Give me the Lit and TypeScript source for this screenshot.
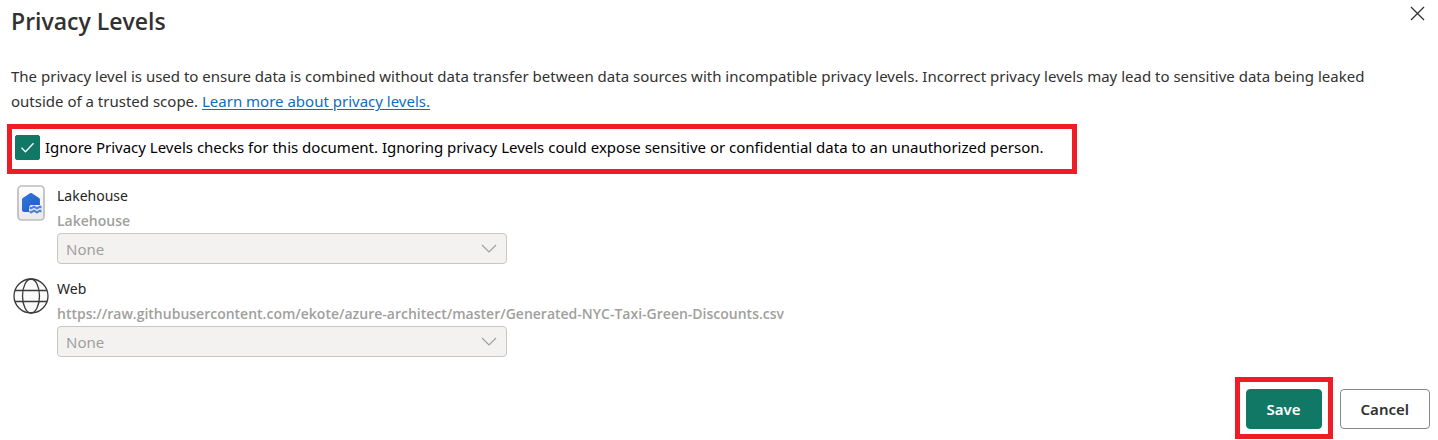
import { LitElement, html, css, svg } from "lit";
import { customElement, property, state } from "lit/decorators.js";

const lakehouseIcon = svg`
  <svg width="28" height="36" viewBox="0 0 28 36" aria-hidden="true">
    <defs>
      <linearGradient id="card" x1="0" y1="0" x2="0" y2="1">
        <stop offset="0" stop-color="#fdfdfd" />
        <stop offset="1" stop-color="#e9e9e9" />
      </linearGradient>
      <linearGradient id="house" x1="0" y1="0" x2="1" y2="1">
        <stop offset="0" stop-color="#2f78e0" />
        <stop offset="1" stop-color="#2459bd" />
      </linearGradient>
    </defs>
    <rect x="1" y="1" width="26" height="34" rx="3.5" fill="url(#card)" stroke="#bdbdbd" stroke-width="1.700" />
    <path d="M5 14.600c0-.6.3-1.100.8-1.500L13 8.200c.6-.4 1.300-.4 1.900 0l7.200 4.900c.5.4.8.9.8 1.500V20H14.500c-1.500 0-2.500 1-2.500 2.500V27H7c-1.100 0-2-.9-2-2z" fill="url(#house)" />
    <path d="M12.500 21.200q1.500 1.500 3 0t3 0 3 0 3 0v2.500q-1.500-1.500-3 0t-3 0-3 0-3 0zM12.500 25.200q1.500 1.500 3 0t3 0 3 0 3 0v2.500q-1.500-1.500-3 0t-3 0-3 0-3 0z" fill="#4a82dc" />
  </svg>`;

const webIcon = svg`
  <svg width="36" height="36" viewBox="0 0 36 36" aria-hidden="true">
    <g fill="none" stroke="#3b3a39" stroke-width="1.300">
      <circle cx="18" cy="18" r="17" fill="#fafafa" />
      <ellipse cx="18" cy="18" rx="8.500" ry="17" />
      <path d="M2 12.500h32M2 23.500h32" />
    </g>
  </svg>`;

@customElement("data-source-row")
export class DataSourceRow extends LitElement {
  @property() kind = "";
  @property() path = "";
  @property({ type: Boolean }) disabled = false;

  static styles = css`
    :host {
      display: flex;
      gap: 8px;
      color: #252423;
      font-size: 15px;
      line-height: 25px;
    }
    .icon {
      flex: none;
      display: flex;
      justify-content: center;
      align-items: flex-start;
      width: 36px;
      padding-top: 2px;
    }
    .body {
      flex: 1;
      min-width: 0;
    }
    .kind {
      font-size: 14px;
    }
    .path {
      display: block;
      color: #a19f9d;
      font-family: "Open Sans", sans-serif;
      font-size: 14px;
      font-weight: 600;
      overflow-wrap: anywhere;
    }
    .picker {
      display: grid;
      align-items: center;
      max-width: 450px;
    }
    .picker > * {
      grid-area: 1 / 1;
    }
    .level {
      appearance: none;
      box-sizing: border-box;
      width: 100%;
      height: 31px;
      margin: 0;
      padding: 2px 32px 0 8px;
      border: 1px solid #c8c6c4;
      border-radius: 4px;
      background: #f3f2f1;
      color: #a19f9d;
      font: inherit;
      opacity: 1;
    }
    .chevron {
      justify-self: end;
      margin-right: 10px;
      pointer-events: none;
    }
  `;

  render() {
    return html`
      <div class="icon">${this.kind === "Web" ? webIcon : lakehouseIcon}</div>
      <div class="body">
        <div class="kind">${this.kind}</div>
        <label class="path" for="level">${this.path}</label>
        <div class="picker">
          <select class="level" id="level" ?disabled=${this.disabled}>
            <option>None</option>
          </select>
          <svg class="chevron" width="16" height="9" viewBox="0 0 16 9" aria-hidden="true">
            <path d="M1 1l7 7 7-7" fill="none" stroke="#a19f9d" stroke-width="1.200" />
          </svg>
        </div>
      </div>
    `;
  }
}

@customElement("app-root")
export class AppRoot extends LitElement {
  @state() private ignoreLevels = true;

  private sources = [
    { kind: "Lakehouse", path: "Lakehouse" },
    {
      kind: "Web",
      path: "https://raw.githubusercontent.com/ekote/azure-architect/master/Generated-NYC-Taxi-Green-Discounts.csv",
    },
  ];

  static styles = css`
    :host {
      display: block;
      background: #fff;
      color: #323130;
      font-family: "Noto Sans", sans-serif;
      font-size: 15px;
      line-height: 25px;
    }
    .header {
      display: flex;
      justify-content: space-between;
      align-items: flex-start;
      padding: 5px 12px 0 11px;
    }
    .title {
      margin: 0;
      font-family: "Open Sans", sans-serif;
      font-size: 23px;
      line-height: 32px;
      font-weight: 600;
    }
    .close {
      display: flex;
      padding: 1px;
      border: 0;
      background: none;
    }
    .intro {
      margin: 27px 32px 0 11px;
    }
    .link {
      color: #0f6cbd;
      text-underline-offset: 2px;
    }
    .consent {
      box-sizing: border-box;
      width: fit-content;
      margin: 10px 7px 0;
      padding: 6px 28px 9px 3px;
      border: 5px solid #ee1c25;
      color: #000;
    }
    .option {
      display: flex;
      align-items: center;
      gap: 5px;
    }
    .check {
      flex: none;
      display: grid;
      width: 25px;
      height: 25px;
    }
    .check > * {
      grid-area: 1 / 1;
    }
    .box {
      appearance: none;
      width: 25px;
      height: 25px;
      margin: 0;
      border: 1px solid #605e5c;
      border-radius: 2px;
    }
    .box:checked {
      border-color: #117865;
      background: #117865;
    }
    .tick {
      pointer-events: none;
    }
    .sources {
      display: grid;
      gap: 12px;
      margin: 9px 13px 0;
    }
    .footer {
      display: flex;
      justify-content: flex-end;
      align-items: baseline;
      gap: 7px;
      margin-top: 20px;
      padding-right: 8px;
    }
    .highlight {
      display: flex;
      padding: 7px 6px 5px;
      border: 5px solid #ee1c25;
    }
    .button {
      box-sizing: border-box;
      height: 40px;
      padding: 0 20px;
      border: 1px solid #8a8886;
      border-radius: 4px;
      background: #fff;
      color: #323130;
      font: inherit;
      font-size: 15px;
      font-weight: 600;
    }
    .primary {
      border-color: #117865;
      background: #117865;
      color: #fff;
    }
  `;

  render() {
    return html`
      <header class="header">
        <h1 class="title">Privacy Levels</h1>
        <button class="close" aria-label="Close">
          <svg width="15" height="15" viewBox="0 0 15 15" aria-hidden="true">
            <path d="M1 1l13 13M14 1L1 14" fill="none" stroke="#323130" stroke-width="1.300" />
          </svg>
        </button>
      </header>
      <p class="intro">
        The privacy level is used to ensure data is combined without data transfer between data sources with
        incompatible privacy levels. Incorrect privacy levels may lead to sensitive data being leaked outside of a
        trusted scope. <a class="link" href="#">Learn more about privacy levels.</a>
      </p>
      <div class="consent">
        <label class="option">
          <span class="check">
            <input
              class="box"
              type="checkbox"
              .checked=${this.ignoreLevels}
              @change=${(e: Event) => (this.ignoreLevels = (e.target as HTMLInputElement).checked)}
            />
            <svg class="tick" width="25" height="25" viewBox="0 0 25 25" aria-hidden="true">
              <path d="M6.500 12.800l4 4 8-8.500" fill="none" stroke="#fff" stroke-width="1.300" />
            </svg>
          </span>
          <span
            >Ignore Privacy Levels checks for this document. Ignoring privacy Levels could expose sensitive or
            confidential data to an unauthorized person.</span
          >
        </label>
      </div>
      <div class="sources">
        ${this.sources.map(
          (s) => html`<data-source-row .kind=${s.kind} .path=${s.path} ?disabled=${this.ignoreLevels}></data-source-row>`
        )}
      </div>
      <footer class="footer">
        <div class="highlight"><button class="button primary">Save</button></div>
        <button class="button">Cancel</button>
      </footer>
    `;
  }
}
